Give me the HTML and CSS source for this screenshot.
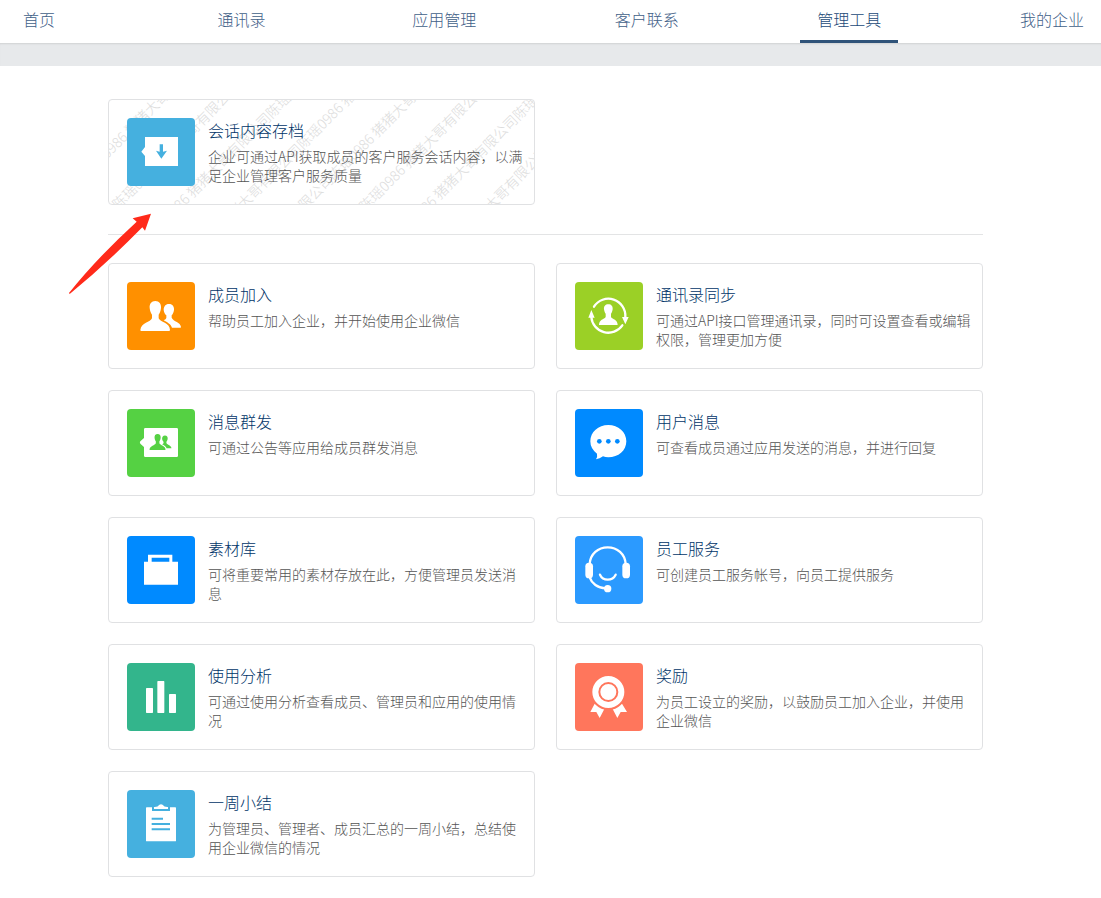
FILE: index.html
```html
<!DOCTYPE html>
<html lang="zh-CN">
<head>
    <meta charset="UTF-8">
    <meta name="viewport" content="width=device-width, initial-scale=1.0">
    <title>管理工具</title>
    <link rel="stylesheet" href="styles.css">
</head>
<body>

    <svg class="defs" aria-hidden="true">
        <symbol id="person" viewBox="0 0 204 204">
            <path d="M85 57C97 57 103 66 102 78C101 88 98 94 95 98V109C99 121 129 122 129 144Q129 147 126 147H43Q40 147 40 144C42 122 71 121 75 109V98C72 94 69 88 68 78C67 66 73 57 85 57Z"/>
        </symbol>
        <symbol id="people" viewBox="0 0 204 204">
            <use href="#person" width="204" height="204"/>
            <path d="M126 66C137 66 142 74 141 84C140 92 137 97 134 100V107C139 119 161 120 162 135Q162 137 160 137H135C132 127 121 121 110 115Q117 112 118 108V100C114 97 111 92 110 84C110 74 115 66 126 66Z"/>
        </symbol>
    </svg>

    <header class="header">
        <nav class="nav">
            <a href="#">首页</a>
            <a href="#">通讯录</a>
            <a href="#">应用管理</a>
            <a href="#">客户联系</a>
            <a href="#" class="active">管理工具</a>
            <a href="#">我的企业</a>
        </nav>
    </header>

    <main class="content">
        <section class="grid top">
            <a href="#" class="card">
                <div class="watermark-box" aria-hidden="true">
                    <div class="watermark" id="watermark"></div>
                </div>
                <svg class="icon sky" viewBox="0 0 204 204">
                    <path d="M54 57H153V144H54V114L43 101L54 87Z"/>
                    <path class="cut" d="M98 79H108V101L120 98L103 122L87 98L98 101Z"/>
                </svg>
                <div class="info">
                    <h3>会话内容存档</h3>
                    <p>企业可通过API获取成员的客户服务会话内容，以满足企业管理客户服务质量</p>
                </div>
            </a>
            <svg class="arrow" viewBox="0 0 330 300" aria-hidden="true">
                <path d="M273 26L218 40L230 50Q110 160 27 264L29 267Q140 176 247 67L255 77Z"/>
            </svg>
        </section>

        <section class="grid">
            <a href="#" class="card">
                <svg class="icon orange" viewBox="0 0 204 204">
                    <use href="#people" width="204" height="204"/>
                </svg>
                <div class="info">
                    <h3>成员加入</h3>
                    <p>帮助员工加入企业，并开始使用企业微信</p>
                </div>
            </a>

            <a href="#" class="card">
                <svg class="icon lime" viewBox="0 0 204 204">
                    <path class="line" d="M57 74A51 51 0 0 1 151 105M49 105A51 51 0 0 0 142 130"/>
                    <path d="M40 107L49 84L59 107ZM141 105L151 127L161 105Z"/>
                    <path d="M100 67C109 67 114 73 113 82C112 89 110 93 108 95V105C113 113 128 112 128 129H72C72 112 87 113 92 105V95C90 93 88 89 87 82C86 73 91 67 100 67Z"/>
                </svg>
                <div class="info">
                    <h3>通讯录同步</h3>
                    <p>可通过API接口管理通讯录，同时可设置查看或编辑权限，管理更加方便</p>
                </div>
            </a>

            <a href="#" class="card">
                <svg class="icon green" viewBox="0 0 204 204">
                    <path d="M55 57H149Q153 57 153 61V140Q153 144 149 144H55Q51 144 51 140V114L40 104Q37 100 40 97L51 87V61Q51 57 55 57Z"/>
                    <use class="cut" href="#people" x="46" y="44" width="110" height="110"/>
                </svg>
                <div class="info">
                    <h3>消息群发</h3>
                    <p>可通过公告等应用给成员群发消息</p>
                </div>
            </a>

            <a href="#" class="card">
                <svg class="icon blue" viewBox="0 0 204 204">
                    <path d="M100 48C130 48 154 69 154 97S130 145 100 145Q91 145 84 142Q74 149 63 151Q68 143 66 134Q46 119 46 97C46 69 70 48 100 48Z"/>
                    <circle class="cut" cx="73" cy="97" r="7"/>
                    <circle class="cut" cx="100" cy="97" r="7"/>
                    <circle class="cut" cx="127" cy="97" r="7"/>
                </svg>
                <div class="info">
                    <h3>用户消息</h3>
                    <p>可查看成员通过应用发送的消息，并进行回复</p>
                </div>
            </a>

            <a href="#" class="card">
                <svg class="icon blue" viewBox="0 0 204 204">
                    <path d="M63 56H136V77H153V146H51V77H63ZM74 65V77H127V65Z" fill-rule="evenodd"/>
                </svg>
                <div class="info">
                    <h3>素材库</h3>
                    <p>可将重要常用的素材存放在此，方便管理员发送消息</p>
                </div>
            </a>

            <a href="#" class="card">
                <svg class="icon azure" viewBox="0 0 204 204">
                    <path class="line" d="M44 84C46 54 69 34 98 34S150 54 152 84M44 124C50 142 68 156 92 157M75 116C84 136 112 136 122 116"/>
                    <rect x="31" y="80" width="23" height="47" rx="11"/>
                    <rect x="142" y="80" width="23" height="47" rx="11"/>
                    <circle cx="98" cy="158" r="11"/>
                </svg>
                <div class="info">
                    <h3>员工服务</h3>
                    <p>可创建员工服务帐号，向员工提供服务</p>
                </div>
            </a>

            <a href="#" class="card">
                <svg class="icon teal" viewBox="0 0 204 204">
                    <rect x="57" y="75" width="21" height="75" rx="2"/>
                    <rect x="91" y="54" width="21" height="96" rx="2"/>
                    <rect x="126" y="93" width="21" height="57" rx="2"/>
                </svg>
                <div class="info">
                    <h3>使用分析</h3>
                    <p>可通过使用分析查看成员、管理员和应用的使用情况</p>
                </div>
            </a>

            <a href="#" class="card">
                <svg class="icon coral" viewBox="0 0 204 204">
                    <path d="M59 122L46 147L64 147L74 165L90 134ZM141 122L156 147L137 147L127 165L111 134Z"/>
                    <circle class="outlined" cx="100" cy="87" r="51"/>
                    <circle class="ring" cx="100" cy="87" r="27"/>
                </svg>
                <div class="info">
                    <h3>奖励</h3>
                    <p>为员工设立的奖励，以鼓励员工加入企业，并使用企业微信</p>
                </div>
            </a>

            <a href="#" class="card">
                <svg class="icon sky" viewBox="0 0 204 204">
                    <rect x="57" y="52" width="90" height="102" rx="2"/>
                    <path class="outlined" d="M78 60V49L90 47Q102 32 114 47L126 49V60Z"/>
                    <path class="ring" d="M74 86H108M74 102H129M74 118H129"/>
                </svg>
                <div class="info">
                    <h3>一周小结</h3>
                    <p>为管理员、管理者、成员汇总的一周小结，总结使用企业微信的情况</p>
                </div>
            </a>
        </section>
    </main>

    <script>
        const texto = '猪猪大哥有限公司陈瑶0986 ';
        const watermark = document.getElementById('watermark');

        for (let i = 0; i < 10; i++) {
            const line = document.createElement('div');
            line.textContent = texto.repeat(5);
            watermark.appendChild(line);
        }
    </script>
</body>
</html>
```
FILE: styles.css
```css
body {
    margin: 0;
    font-family: "Noto Sans CJK SC", sans-serif;
    font-weight: 300;
    background-color: white;
    overflow-x: hidden;
}
a {
    text-decoration: none;
}
.defs {
    position: absolute;
    width: 0;
    height: 0;
}
.header::after {
    content: "";
    display: block;
    height: 23px;
    background-color: #e7e9eb;
    box-shadow: inset 0 2px 2px -1px #d0d2d3;
}
.nav {
    display: flex;
    justify-content: space-between;
    margin-left: -10px;
}
.nav a {
    box-sizing: border-box;
    width: 98px;
    height: 43px;
    line-height: 38px;
    border-bottom: 3px solid transparent;
    font-size: 16px;
    text-align: center;
    color: #3f6088;
}
.nav a.active {
    color: #234a78;
    border-bottom-color: #2f5379;
}
.content {
    padding: 33px 118px 22px 108px;
}
.grid {
    display: grid;
    grid-template-columns: 1fr 1fr;
    gap: 21px;
}
.top {
    position: relative;
    padding-bottom: 29px;
    margin-bottom: 28px;
    border-bottom: 1px solid #e3e4e5;
}
.card {
    position: relative;
    display: flex;
    gap: 13px;
    padding: 18px 8px 18px 18px;
    border: 1px solid #e0e1e3;
    border-radius: 4px;
}
.icon {
    position: relative;
    flex: none;
    width: 68px;
    height: 68px;
    border-radius: 4px;
    background-color: var(--tile);
    fill: white;
}
.icon .cut {
    fill: var(--tile);
}
.icon .line {
    fill: none;
    stroke: white;
    stroke-width: 7;
    stroke-linecap: round;
}
.icon .outlined {
    stroke: var(--tile);
    stroke-width: 6;
}
.icon .ring {
    fill: none;
    stroke: var(--tile);
    stroke-width: 6;
}
.sky {
    --tile: #45b0df;
}
.orange {
    --tile: #ff9000;
}
.lime {
    --tile: #9bd026;
}
.green {
    --tile: #55d143;
}
.blue {
    --tile: #008aff;
}
.azure {
    --tile: #2b9aff;
}
.teal {
    --tile: #33b58c;
}
.coral {
    --tile: #ff765c;
}
.info {
    position: relative;
    min-width: 0;
}
.info h3 {
    margin: 0 0 5px;
    font-size: 16px;
    font-weight: inherit;
    line-height: 24px;
    color: #003468;
}
.info p {
    margin: 0;
    font-size: 14px;
    line-height: 19px;
    color: #555;
}
.watermark-box {
    position: absolute;
    inset: 0;
    overflow: hidden;
    border-radius: 4px;
}
.watermark {
    position: absolute;
    left: -83px;
    top: -211px;
    font-size: 14px;
    line-height: 44px;
    white-space: pre;
    color: #dcdcdc;
    transform: rotate(-45deg);
    transform-origin: 350px 242px;
}
.arrow {
    position: absolute;
    left: -48px;
    top: 106px;
    width: 110px;
    height: 100px;
    fill: #ff2a1a;
}
```
